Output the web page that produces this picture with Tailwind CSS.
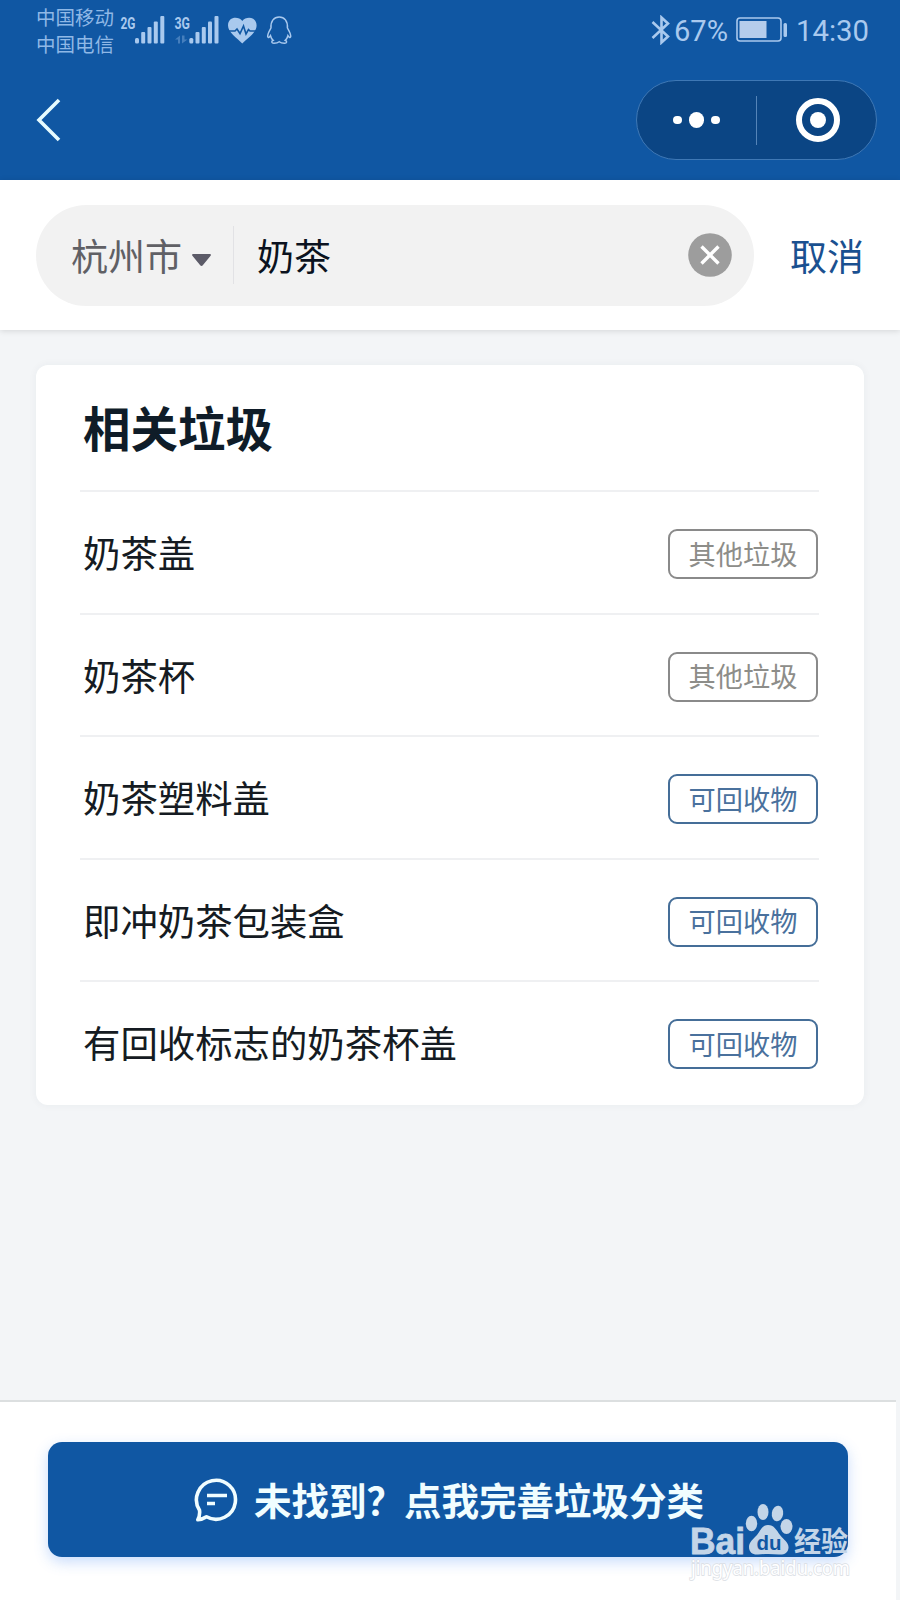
<!DOCTYPE html>
<html lang="zh-CN">
<head>
    <meta charset="UTF-8">
    <meta name="viewport" content="width=device-width, initial-scale=1.0">
    <title>相关垃圾</title>
    <script src="https://cdn.jsdelivr.net/npm/@tailwindcss/browser@4"></script>
    <style>
        body {
            font-family: 'Noto Sans CJK SC', sans-serif;
        }
    </style>
</head>
<body>
    <div class="relative w-[900px] h-[1600px] flex flex-col overflow-hidden bg-[#f3f5f7]">
        <!-- Header -->
        <header class="h-[180px] shrink-0 bg-[#1057a3]">
            <!-- Status bar -->
            <div class="h-[60px] pl-9 pr-[28px] flex items-center justify-between text-[#a9c9ee]">
                <div class="flex items-center">
                    <div class="text-[19.5px] leading-[27px] w-[78px] whitespace-nowrap pb-px text-[#8fb8e6]">
                        <p>中国移动</p>
                        <p>中国电信</p>
                    </div>
                    <svg class="ml-1.5" width="174" height="34" viewBox="120 13 174 34" fill="#a9c9ee">
                        <text x="120.500" y="28.500" font-family="Roboto" font-weight="700" font-size="17" textLength="15" lengthAdjust="spacingAndGlyphs">2G</text>
                        <rect x="135" y="38" width="4" height="5.500" rx="1.500" />
                        <rect x="141.200" y="32" width="4" height="11.500" rx="1" />
                        <rect x="147.500" y="27" width="4" height="16.500" rx="1" />
                        <rect x="153.800" y="21.500" width="4" height="22" rx="1" />
                        <rect x="160.300" y="16" width="4" height="27.500" rx="1" />
                        <text x="174.500" y="28.500" font-family="Roboto" font-weight="700" font-size="17" textLength="15.500" lengthAdjust="spacingAndGlyphs">3G</text>
                        <path d="M180 35.500v8h-2v-4h-3zM182 35.500v8l5.500-4h-3v-4z" opacity=".35" />
                        <rect x="189.300" y="38" width="4" height="5.500" rx="1.500" />
                        <rect x="195.500" y="32" width="4" height="11.500" rx="1" />
                        <rect x="201.800" y="27" width="4" height="16.500" rx="1" />
                        <rect x="208" y="21.500" width="4" height="22" rx="1" />
                        <rect x="214.500" y="16" width="4" height="27.500" rx="1" />
                        <!-- heart rate -->
                        <path d="M242.300 43.500C237 38 228 32.500 228 25.500c0-9 10.500-9.500 14.300-4.500 3.800-5 14.300-4.500 14.300 4.500 0 7-9 12.500-14.300 18z" />
                        <path d="M228 31h7l2-2 3 4.500 3.500-7.500 2.500 8 2.500-4.500 1.500 1.500h7" fill="none" stroke="#1057a3" stroke-width="1.600" />
                        <!-- penguin -->
                        <path d="M271 28c-.5-7 3-11 8.200-11s8.700 4 8.200 11c2 3.500 3.600 6 3.300 8.500-.5 2-2 .5-2.800-.8-.5 2-1.400 3.600-2.700 4.600 2.300 1 1.700 3-.7 3-2.300 0-4-.4-5.300-1.500-1.300 1.100-3 1.500-5.300 1.500-2.400 0-3-2-.7-3-1.300-1-2.200-2.600-2.700-4.600-.8 1.300-2.300 2.800-2.800.8-.3-2.500 1.300-5 3.300-8.500z" fill="none" stroke="#a9c9ee" stroke-width="1.500" />
                    </svg>
                </div>
                <div class="flex items-center">
                    <svg width="20" height="30" viewBox="0 0 20 30" fill="none" stroke="#a9c9ee" stroke-width="2.600">
                        <path d="M1.500 7 17 21.500 10.500 27.500V2.500L17 8.500 1.500 23" />
                    </svg>
                    <svg class="ml-[3px]" width="56" height="40" viewBox="0 0 56 40" fill="#a9c9ee">
                        <text x="0" y="31" font-family="Roboto" font-size="29.500" textLength="54" lengthAdjust="spacingAndGlyphs">67%</text>
                    </svg>
                    <svg class="ml-[6px]" width="52" height="26" viewBox="0 0 52 26">
                        <rect x="1" y="1" width="44" height="23" rx="3" fill="none" stroke="#a9c9ee" stroke-width="1.600" />
                        <rect x="3.500" y="4" width="27" height="17" fill="#b5cdec" />
                        <rect x="47.500" y="6" width="3.500" height="14" rx="1.500" fill="#a9c9ee" />
                    </svg>
                    <svg class="ml-2" width="76" height="40" viewBox="0 0 76 40" fill="#a9c9ee">
                        <text x="0" y="31" font-family="Roboto" font-size="29.500" textLength="73" lengthAdjust="spacingAndGlyphs">14:30</text>
                    </svg>
                </div>
            </div>
            <!-- Navigation -->
            <div class="h-[120px] pl-9 pr-[23px] flex items-center justify-between">
                <svg width="26" height="46" viewBox="0 0 26 46" fill="none" stroke="#e6fbff" stroke-width="3.600">
                    <path d="M23 3 3 23l20 20" />
                </svg>
                <div class="w-[241px] h-20 rounded-full border border-[#3f78b5] bg-[#0b4584] flex items-center">
                    <div class="w-[119px] flex items-center justify-center gap-[7px]">
                        <span class="size-[8.5px] rounded-full bg-white"></span>
                        <span class="size-[15.5px] rounded-full bg-white"></span>
                        <span class="size-[8.5px] rounded-full bg-white"></span>
                    </div>
                    <div class="w-px h-[49px] bg-[#5584b8]"></div>
                    <div class="flex-1 flex justify-center">
                        <div class="size-11 rounded-full border-[6px] border-white flex items-center justify-center ml-[3px]">
                            <span class="size-4 rounded-full bg-white"></span>
                        </div>
                    </div>
                </div>
            </div>
        </header>

        <!-- Search -->
        <div class="h-[150px] shrink-0 bg-white pl-9 pr-9 flex items-center shadow-[0_1px_6px_rgba(0,0,0,0.13)]">
            <div class="w-[718px] h-[101px] rounded-full bg-[#f2f2f2] flex items-center pl-[35px] pr-[22px] text-[37px]">
                <span class="text-[#606065] pt-px">杭州市</span>
                <svg class="ml-[10px] mt-2.5" width="19" height="13" viewBox="0 0 19 13" fill="#5c5b68">
                    <path d="M1.500 0h16c1.500 0 1.800 1 .9 2l-7.400 9c-1 1.300-2 1.300-3 0L.6 2C-.3 1 0 0 1.500 0z" />
                </svg>
                <div class="ml-[22px] w-px h-[58px] bg-[#e2e2e5]"></div>
                <span class="ml-[23px] pt-px text-[#0b1220]">奶茶</span>
                <svg class="ml-auto" width="44" height="44" viewBox="0 0 44 44">
                    <circle cx="22" cy="22" r="21.800" fill="#9d9d9d" />
                    <path d="m13.500 13.500 17 17m0-17-17 17" stroke="#fff" stroke-width="3.400" />
                </svg>
            </div>
            <span class="ml-auto pt-px text-[37px] text-[#1a5090] whitespace-nowrap">取消</span>
        </div>

        <!-- Results -->
        <main class="mt-[35px] mx-9 h-[740px] rounded-[12px] bg-white pl-11 pr-[45px] shadow-[0_0_8px_rgba(40,60,80,0.05)] text-[#151b22]">
            <h2 class="h-[125px] pl-[3px] pb-px flex items-center text-[47.5px] leading-none font-bold text-[#0f1c28]">相关垃圾</h2>
            <ul class="text-[37.4px]">
                <li class="h-[122.5px] border-t-2 border-[#eff0f2] pl-[3px] pr-px flex items-center justify-between">
                    <span>奶茶盖</span>
                    <span class="w-[150px] h-[50px] rounded-[9px] border-2 border-[#8a8a8a] text-[#8d8d89] text-[27.2px] flex items-center justify-center mt-1 pb-0.5">其他垃圾</span>
                </li>
                <li class="h-[122.5px] border-t-2 border-[#eff0f2] pl-[3px] pr-px flex items-center justify-between">
                    <span>奶茶杯</span>
                    <span class="w-[150px] h-[50px] rounded-[9px] border-2 border-[#8a8a8a] text-[#8d8d89] text-[27.2px] flex items-center justify-center mt-1 pb-0.5">其他垃圾</span>
                </li>
                <li class="h-[122.5px] border-t-2 border-[#eff0f2] pl-[3px] pr-px flex items-center justify-between">
                    <span>奶茶塑料盖</span>
                    <span class="w-[150px] h-[50px] rounded-[9px] border-2 border-[#456e98] text-[#4a719d] text-[27.2px] flex items-center justify-center mt-1 pb-0.5">可回收物</span>
                </li>
                <li class="h-[122.5px] border-t-2 border-[#eff0f2] pl-[3px] pr-px flex items-center justify-between">
                    <span>即冲奶茶包装盒</span>
                    <span class="w-[150px] h-[50px] rounded-[9px] border-2 border-[#456e98] text-[#4a719d] text-[27.2px] flex items-center justify-center mt-1 pb-0.5">可回收物</span>
                </li>
                <li class="h-[122.5px] border-t-2 border-[#eff0f2] pl-[3px] pr-px flex items-center justify-between">
                    <span>有回收标志的奶茶杯盖</span>
                    <span class="w-[150px] h-[50px] rounded-[9px] border-2 border-[#456e98] text-[#4a719d] text-[27.2px] flex items-center justify-center mt-1 pb-0.5">可回收物</span>
                </li>
            </ul>
        </main>

        <!-- Footer -->
        <footer class="mt-auto mr-1 h-[200px] shrink-0 border-t-2 border-[#dcdfe0] bg-white pt-10 pl-12">
            <button class="w-[800px] h-[115px] rounded-[14px] bg-[#1057a3] text-[#f0fdff] text-[37.5px] font-bold flex items-center justify-center gap-4 pl-0.5 shadow-[0_5px_14px_rgba(60,130,240,0.28)]">
                <svg width="44" height="44" viewBox="0 0 44 44" fill="none" stroke="#f0fdff" stroke-width="3.600">
                    <path d="M5.500 32.200A19.500 19.500 0 1 1 12.500 38.800C10 40.500 7.500 41.500 3.800 41.800 5.500 38.500 6 35.500 5.500 32.200z" stroke-linejoin="round" />
                    <path d="M13 17.500h20M13 25.500h8" />
                </svg>
                <span class="whitespace-nowrap">未找到？点我完善垃圾分类</span>
            </button>
        </footer>

        <!-- Watermark -->
        <svg class="absolute left-[686px] top-[1500px]" width="172" height="86" viewBox="686 1500 172 86">
            <g fill="#c3d5e8">
                <text x="690" y="1553.500" font-family="Liberation Sans" font-weight="700" font-size="36" stroke="#c3d5e8" stroke-width=".8" textLength="55" lengthAdjust="spacingAndGlyphs">Bai</text>
                <ellipse cx="751.500" cy="1523.500" rx="5.700" ry="7.700" />
                <ellipse cx="763" cy="1512" rx="5.500" ry="8" />
                <ellipse cx="777.500" cy="1513.500" rx="5.700" ry="7.800" transform="rotate(8 777.500 1513.500)" />
                <ellipse cx="786.500" cy="1526.500" rx="6" ry="7.500" />
                <path d="M768 1525c6 0 8.500 5 12 10 4 5 9 7.500 8.500 13-.5 5-4.500 7-9.500 6.500-7-.8-14-.8-21 0-5 .5-9-2-9-7.500 0-5 4-7.500 8-12 3.500-4.500 5-10 11-10z" />
                <text x="794" y="1551.500" font-family="Noto Sans CJK SC" font-weight="700" font-size="28" textLength="54" lengthAdjust="spacingAndGlyphs">经验</text>
            </g>
            <text x="756.500" y="1549.500" font-family="Liberation Sans" font-weight="700" font-size="21" fill="#1057a3" textLength="25" lengthAdjust="spacingAndGlyphs">du</text>
            <text x="691" y="1575" font-family="Noto Sans" font-size="19" fill="#fff" stroke="#d9dde3" stroke-width="1.500" paint-order="stroke" textLength="159" lengthAdjust="spacingAndGlyphs">jingyan.baidu.com</text>
        </svg>
    </div>
</body>
</html>
